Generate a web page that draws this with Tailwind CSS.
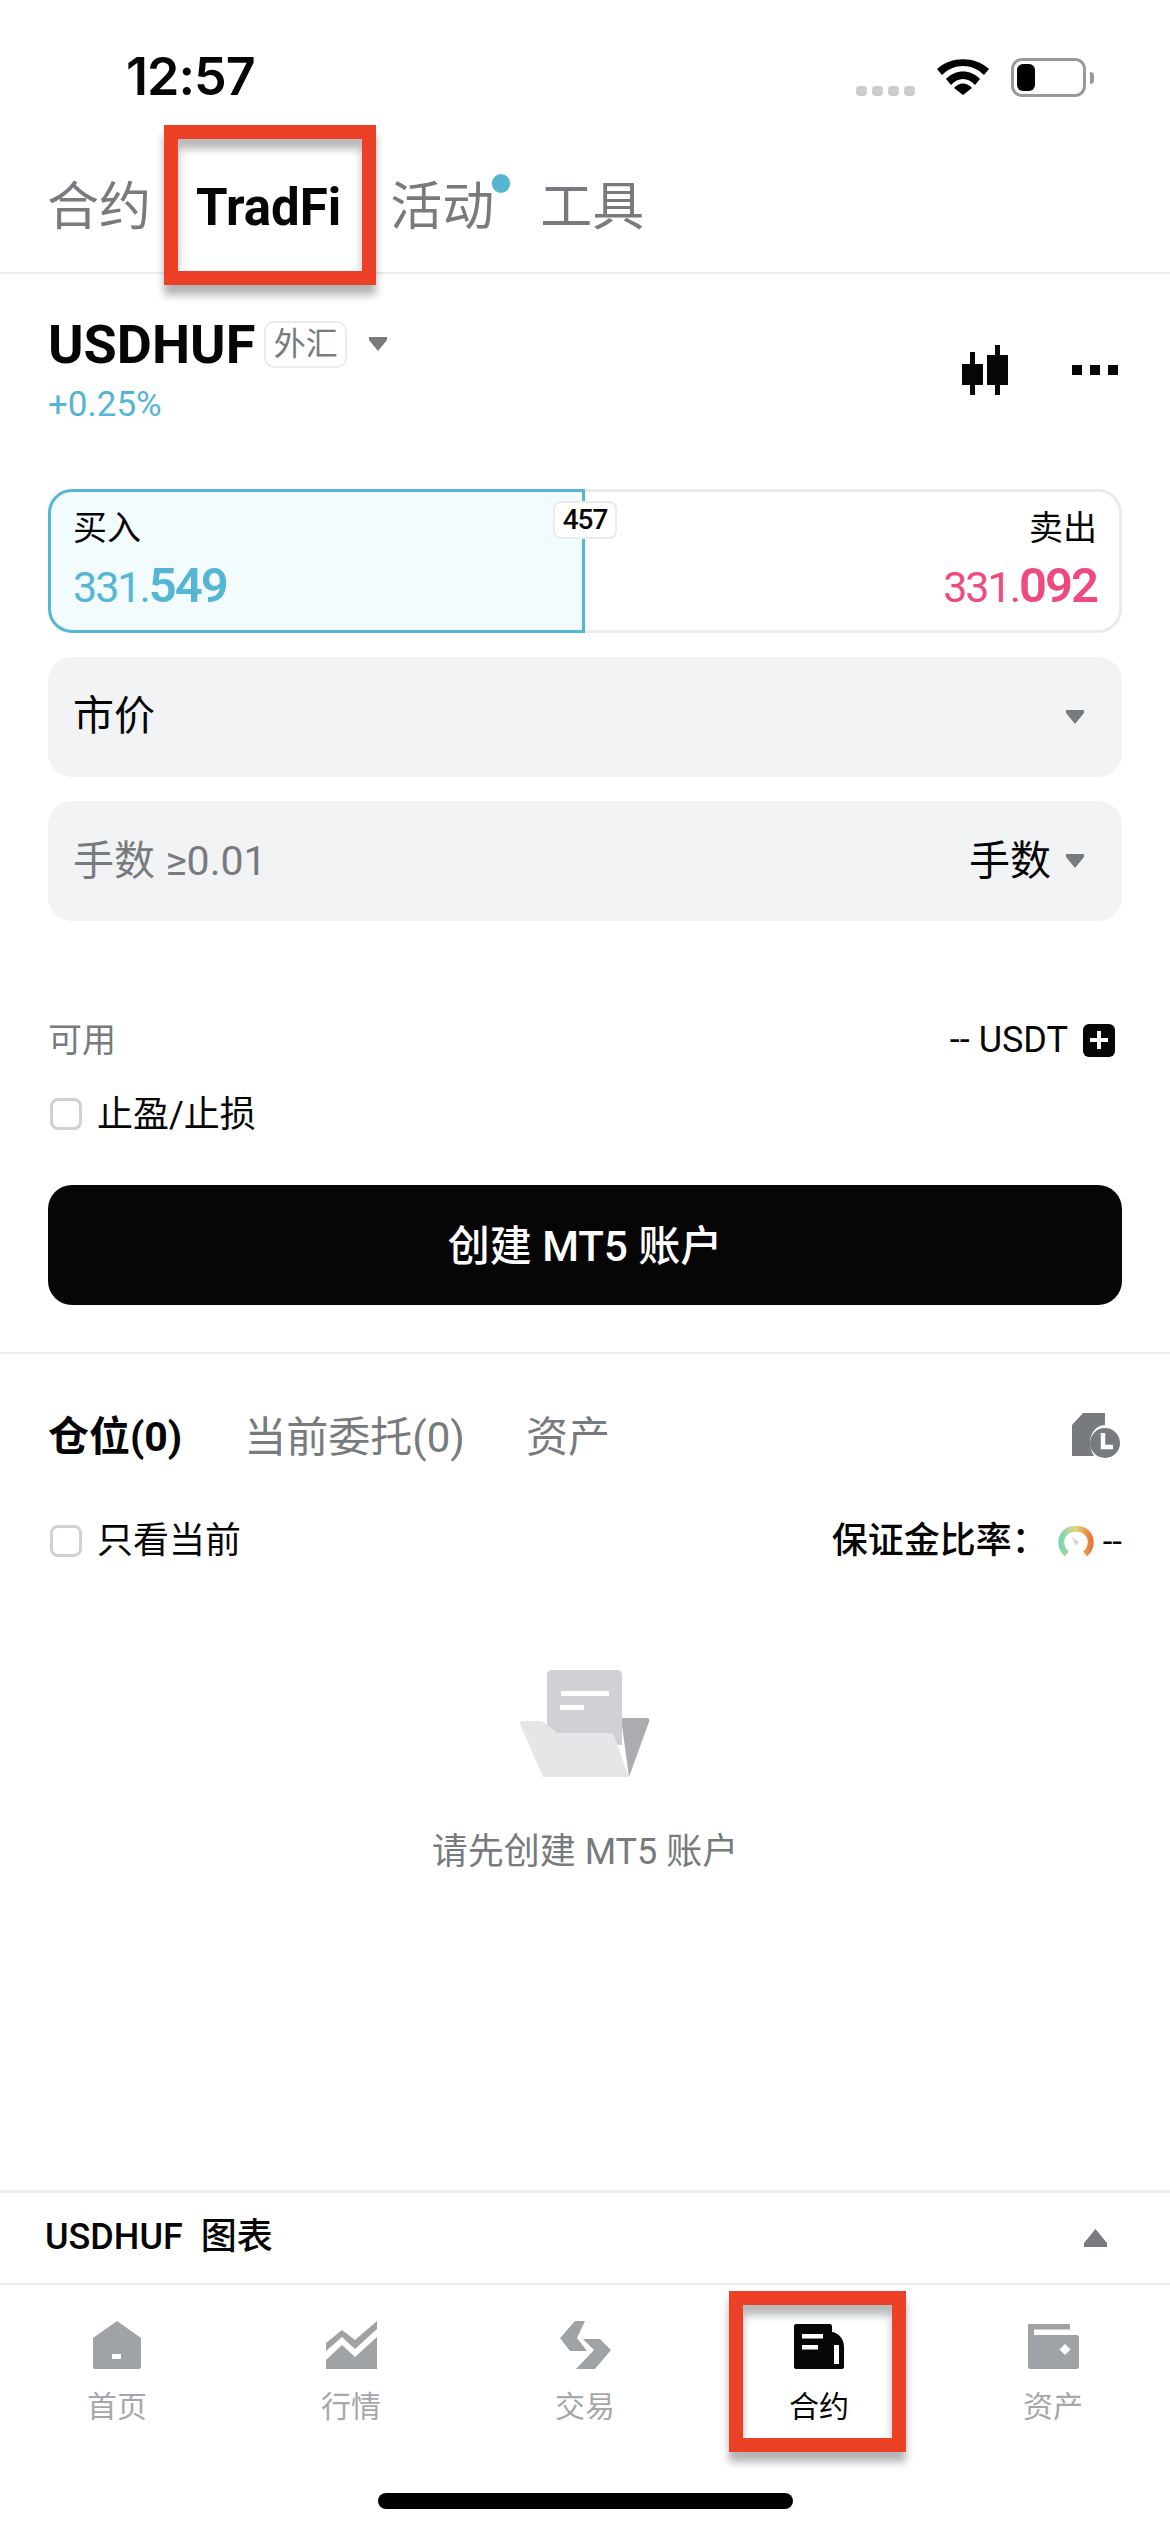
<!DOCTYPE html>
<html lang="zh-CN">
<head>
  <meta charset="UTF-8" />
  <title>TradFi</title>
  <script src="https://cdn.jsdelivr.net/npm/@tailwindcss/browser@4"></script>
</head>
<body class="bg-white text-[#060606] font-[Roboto,'Noto_Sans_CJK_SC',sans-serif]">
<div class="relative w-[1170px] h-[2532px] flex flex-col overflow-hidden">

  <!-- Status bar -->
  <div class="h-[125px] flex items-start pt-[50px] pl-[126px] pr-[84px] justify-between">
    <span class="text-[52px] leading-[54px] font-semibold font-[Inter,sans-serif] tracking-[-1px]">12:57</span>
    <div class="flex items-center h-[54px]">
      <div class="flex gap-[5px] mt-[28px]">
        <span class="w-[11px] h-[10px] rounded-[4px] bg-[#cccccc]"></span>
        <span class="w-[11px] h-[10px] rounded-[4px] bg-[#cccccc]"></span>
        <span class="w-[11px] h-[10px] rounded-[4px] bg-[#cccccc]"></span>
        <span class="w-[11px] h-[10px] rounded-[4px] bg-[#cccccc]"></span>
      </div>
      <svg class="ml-[22px]" width="52" height="36" viewBox="0 0 52 36" fill="#000">
        <path d="M0 10C14 -3 38 -3 52 10L47 16C35 4 17 4 5 16Z" />
        <path d="M9 20C18 10 34 10 43 20L38 26C31 18 21 18 14 26Z" />
        <path d="M17 29C22 23 30 23 35 29L26 36Z" />
      </svg>
      <div class="ml-[22px] w-[75px] h-[39px] rounded-[11px] border-[3px] border-[#999999] p-[3px] relative">
        <div class="w-[18px] h-full rounded-[6px] bg-black"></div>
        <span class="absolute right-[-11px] top-[11px] w-[4px] h-[12px] rounded-r-full bg-[#999999]"></span>
      </div>
    </div>
  </div>

  <!-- Top tabs -->
  <div class="h-[149px] pt-[19px] pl-[47px] flex items-center border-b-2 border-[#ebebeb] text-[52px] leading-[60px] text-[#777b7e]">
    <span>合约</span>
    <span class="ml-[45px] text-[51px] font-bold text-[#060606]">TradFi</span>
    <span class="ml-[49px] relative">活动<span class="absolute right-[-16px] top-[-4px] w-[18px] h-[19px] rounded-full bg-[#55b6d4]"></span></span>
    <span class="ml-[46px]">工具</span>
  </div>

  <div class="px-[48px] flex-1 flex flex-col">
    <!-- Symbol header -->
    <div class="mt-[41px] flex items-center justify-between">
      <div>
        <div class="h-[58px] flex items-center">
          <span class="text-[54px] font-bold">USDHUF</span>
          <span class="ml-[9px] w-[83px] h-[47px] rounded-[10px] border-2 border-[#ebebeb] flex items-center justify-center text-[32px] text-[#777b7e]">外汇</span>
          <svg class="ml-[22px]" width="18" height="14" viewBox="0 0 18 14"><path d="M0 0H18V3L9 14L0 3Z" fill="#777b7e" /></svg>
        </div>
        <div class="mt-[13px] h-[38px] flex items-center text-[35px] text-[#55b6d4]">+0.25%</div>
      </div>
      <div class="flex items-center pr-[4px]">
        <svg width="46" height="50" viewBox="0 0 46 50" fill="#060606">
          <rect x="0" y="19" width="21" height="21" />
          <rect x="8" y="7" width="5" height="43" />
          <rect x="25" y="10" width="21" height="30" />
          <rect x="33" y="0" width="5" height="50" />
        </svg>
        <svg class="ml-[64px]" width="46" height="10" viewBox="0 0 46 10" fill="#060606">
          <rect x="0" width="10" height="10" />
          <rect x="18" width="10" height="10" />
          <rect x="36" width="10" height="10" />
        </svg>
      </div>
    </div>

    <!-- Buy / sell -->
    <div class="mt-[65px] h-[144px] flex relative">
      <div class="w-[537px] rounded-l-[24px] border-[3px] border-[#55b6d4] bg-[#f2fbfe] pl-[22px] flex flex-col">
        <span class="mt-[14px] text-[34px] leading-[44px]">买入</span>
        <span class="mt-[10px] text-[43px] leading-[52px] tracking-[-2px] text-[#55b6d4]">331.<span class="text-[49px] font-semibold">549</span></span>
      </div>
      <div class="flex-1 rounded-r-[24px] border-[3px] border-l-0 border-[#ebebeb] pr-[22px] flex flex-col items-end">
        <span class="mt-[14px] text-[34px] leading-[44px]">卖出</span>
        <span class="mt-[10px] text-[43px] leading-[52px] tracking-[-2px] text-[#ee4a80]">331.<span class="text-[49px] font-semibold">092</span></span>
      </div>
      <span class="absolute left-[505px] top-[12px] w-[64px] h-[38px] rounded-[8px] border-2 border-[#ebebeb] bg-white flex items-center justify-center text-[28px] font-medium tracking-[-1px]">457</span>
    </div>

    <!-- Order type -->
    <div class="mt-[24px] h-[120px] rounded-[24px] bg-[#f2f3f5] pl-[25px] pr-[38px] flex items-center justify-between">
      <span class="text-[41px]">市价</span>
      <svg width="18" height="14" viewBox="0 0 18 14"><path d="M0 0H18V3L9 14L0 3Z" fill="#777b7e" /></svg>
    </div>

    <!-- Lots -->
    <div class="mt-[24px] h-[120px] rounded-[24px] bg-[#f2f3f5] pl-[25px] pr-[38px] flex items-center justify-between">
      <span class="text-[41px] pt-[1px] text-[#777b7e]">手数 ≥0.01</span>
      <div class="flex items-center gap-[15px]">
        <span class="text-[41px] pt-[1px]">手数</span>
        <svg width="18" height="14" viewBox="0 0 18 14"><path d="M0 0H18V3L9 14L0 3Z" fill="#777b7e" /></svg>
      </div>
    </div>

    <!-- Available -->
    <div class="mt-[99px] h-[40px] flex items-center justify-between">
      <span class="text-[34px] text-[#777b7e]">可用</span>
      <div class="flex items-center pr-[7px]">
        <span class="text-[36px]">-- USDT</span>
        <span class="ml-[15px] w-[32px] h-[33px] rounded-[6px] bg-[#060606] flex items-center justify-center">
          <svg width="18" height="18" viewBox="0 0 18 18" fill="#fff"><rect x="7" width="4" height="18" /><rect y="7" width="18" height="4" /></svg>
        </span>
      </div>
    </div>

    <!-- TP/SL -->
    <div class="mt-[34px] h-[40px] flex items-center">
      <span class="ml-[2px] w-[32px] h-[32px] rounded-[8px] border-[3px] border-[#cfd1d3]"></span>
      <span class="ml-[15px] pt-[2px] text-[36px]">止盈/止损</span>
    </div>

    <!-- Create account -->
    <div class="mt-[51px] h-[120px] pt-[2px] rounded-[24px] bg-[#060606] flex items-center justify-center text-[42px] font-medium text-white">创建 MT5 账户</div>
  </div>

  <div class="absolute left-0 right-0 top-[1352px] h-[2px] bg-[#ebebeb]"></div>

  <!-- Positions -->
  <div class="absolute left-0 right-0 top-[1406px] px-[48px]">
    <div class="h-[60px] flex items-center justify-between">
      <div class="flex items-center pt-[3px] text-[42px] text-[#777b7e]">
        <span class="font-bold text-[#060606] text-[41px]">仓位(0)</span>
        <span class="ml-[62px]">当前委托(0)</span>
        <span class="ml-[61px]">资产</span>
      </div>
      <svg class="mr-[2px]" width="48" height="46" viewBox="0 0 48 46">
        <path d="M0 12L11 0H33V12C24 12 18 21 18 29C18 34 19 38 22 43H0Z" fill="#777b7e" />
        <circle cx="33" cy="30" r="15" fill="#777b7e" />
        <path d="M31 20V34H41" fill="none" stroke="#fff" stroke-width="4.5" />
      </svg>
    </div>
    <div class="mt-[55px] h-[40px] flex items-center justify-between">
      <div class="flex items-center">
        <span class="ml-[2px] w-[32px] h-[32px] rounded-[8px] border-[3px] border-[#cfd1d3]"></span>
        <span class="ml-[15px] text-[36px]">只看当前</span>
      </div>
      <div class="flex items-center">
        <span class="text-[36px] font-medium">保证金比率：</span>
        <svg class="ml-[10px]" width="36" height="32" viewBox="0 0 36 32" fill="none">
          <defs>
            <linearGradient id="gauge" x1="0" y1="0" x2="1" y2="0">
              <stop offset="0" stop-color="#7fd5b0" />
              <stop offset="0.5" stop-color="#e3d67a" />
              <stop offset="1" stop-color="#e67a3c" />
            </linearGradient>
          </defs>
          <path d="M9 29C2 23 2 14 6 9C12 2 24 2 30 9C34 14 34 23 27 29" stroke="url(#gauge)" stroke-width="6" />
          <path d="M14 12L21 17L18 21Z" fill="#d3d3d3" />
        </svg>
        <span class="ml-[9px] text-[35px] leading-none">--</span>
      </div>
    </div>

    <!-- Empty state -->
    <div class="mt-[109px] flex flex-col items-center">
      <svg width="130" height="108" viewBox="0 0 130 108">
        <path d="M101 48H127C129 48 130 50 129 52L109 107Z" fill="#abacaf" />
        <path d="M27 5C27 2 29 0 32 0H97C100 0 102 2 102 5V75H27Z" fill="#d0d1d4" />
        <rect x="41" y="21" width="48" height="5" fill="#fff" />
        <rect x="40" y="35" width="24" height="5" fill="#fff" />
        <path d="M2 51H20C22 51 23 52 25 53L36 62C37 63 38 63 40 63H90C92 63 93 64 94 66L109 107H23L0 54C0 52 1 51 2 51Z" fill="#e5e6e8" />
      </svg>
      <span class="mt-[54px] text-[36px] leading-[40px] text-[#777b7e]">请先创建 MT5 账户</span>
    </div>
  </div>

  <!-- Chart bar -->
  <div class="h-[95px] pl-[45px] pr-[63px] border-t-[3px] border-b-2 border-[#ebebeb] flex items-center justify-between">
    <span class="text-[36px] font-medium pb-[2px]">USDHUF&nbsp; 图表</span>
    <svg width="23" height="18" viewBox="0 0 23 18"><path d="M11.5 0L23 14V18H0V14Z" fill="#777b7e" /></svg>
  </div>

  <!-- Bottom nav -->
  <div class="h-[247px] relative">
    <div class="grid grid-cols-5 pt-[36px] text-[30px] leading-[40px] text-[#a5a8aa]">
      <div class="flex flex-col items-center">
        <svg class="mb-[18px]" width="52" height="48" viewBox="0 0 52 48">
          <path d="M26 0L50 17V46C50 47 49 48 48 48H4C3 48 2 47 2 46V17Z" fill="#a0a3a5" />
          <rect x="21" y="33" width="9" height="5" fill="#fff" />
        </svg>
        <span>首页</span>
      </div>
      <div class="flex flex-col items-center">
        <svg class="mb-[18px]" width="51" height="48" viewBox="0 0 51 48" fill="#a0a3a5">
          <path d="M0 22L16 9L29 19L51 0V8L29 28L16 16L0 30Z" />
          <path d="M0 39L16 24L29 36L51 16V48H0Z" />
        </svg>
        <span>行情</span>
      </div>
      <div class="flex flex-col items-center">
        <svg class="mb-[18px]" width="52" height="48" viewBox="0 0 52 48" fill="#a0a3a5">
          <path d="M16 0H26L18 17L28 30H11L1 17Z" />
          <path d="M24 18H41L52 29L36 48H17L35 29Z" />
        </svg>
        <span>交易</span>
      </div>
      <div class="flex flex-col items-center text-[#060606]">
        <svg class="mb-[18px] mt-[3px]" width="50" height="45" viewBox="0 0 50 45">
          <path d="M0 2C0 1 1 0 2 0H36C37 0 38 1 38 2V8C45 9 50 15 50 23V43C50 44 49 45 48 45H2C1 45 0 44 0 43Z" fill="#060606" />
          <rect x="8" y="10" width="21" height="4.5" fill="#fff" />
          <rect x="8" y="21" width="16" height="4.5" fill="#fff" />
          <rect x="40" y="21" width="5" height="19" fill="#fff" />
        </svg>
        <span>合约</span>
      </div>
      <div class="flex flex-col items-center">
        <svg class="mb-[18px] mt-[3px]" width="51" height="45" viewBox="0 0 51 45">
          <path d="M0 0H42V5.5H6V11H49C50 11 51 12 51 13V43C51 44 50 45 49 45H2C1 45 0 44 0 43Z" fill="#a0a3a5" />
          <path d="M37 20L42.5 25.5L37 31L31.5 25.5Z" fill="#fff" />
        </svg>
        <span>资产</span>
      </div>
    </div>
    <div class="absolute left-[378px] top-[208px] w-[415px] h-[16px] rounded-full bg-black"></div>
  </div>

  <!-- Red annotation boxes -->
  <div class="absolute left-[164px] top-[125px] w-[212px] h-[160px] border-[14px] border-[#ec4126] shadow-[0_10px_8px_rgba(0,0,0,0.3),inset_0_10px_8px_rgba(0,0,0,0.28)]"></div>
  <div class="absolute left-[729px] top-[2291px] w-[177px] h-[161px] border-[14px] border-[#ec4126] shadow-[0_10px_8px_rgba(0,0,0,0.3),inset_0_10px_8px_rgba(0,0,0,0.28)]"></div>
</div>
</body>
</html>
